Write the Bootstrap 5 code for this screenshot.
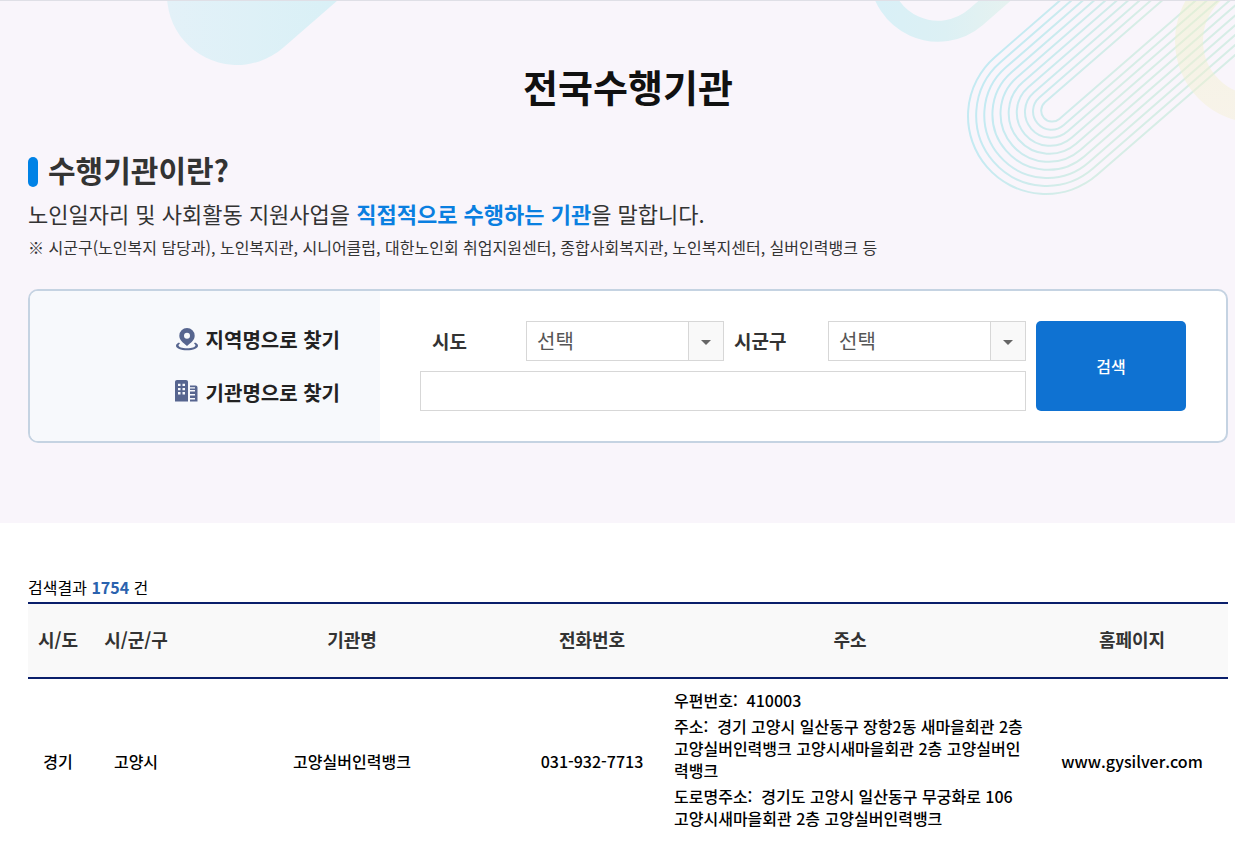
<!DOCTYPE html>
<html lang="ko">
<head>
<meta charset="utf-8">
<meta name="viewport" content="width=device-width, initial-scale=1">
<title>전국수행기관</title>
<link href="https://cdn.jsdelivr.net/npm/bootstrap@5.3.0/dist/css/bootstrap.min.css" rel="stylesheet">
<style>
  body { font-family: "Noto Sans CJK KR", "Noto Sans", sans-serif; color: #000; font-size: 16px; }
  .page-wrap { padding-left: 28px; padding-right: 7px; }
  .hero { background: #f9f5fb; border-top: 1px solid #dfdfe6; padding-bottom: 80px; }
  .hero-art { top: 0; height: 200px; pointer-events: none; }
  .page-title { font-size: 38px; line-height: 56px; color: #111; padding-top: 57px; margin-bottom: 34px; }
  .section-title { font-size: 30px; line-height: 42px; color: #333; padding-left: 20px; margin-bottom: 3px; }
  .section-title::before { content: ""; position: absolute; left: 0; top: 9px; width: 10px; height: 30px; border-radius: 5px; background: #0082e6; }
  .intro { font-size: 22px; line-height: 40px; color: #333; }
  .intro strong { color: #0a7fe0; }
  .note { line-height: 28px; color: #333; margin-bottom: 28px; }
  .search-box { border: 2px solid #c5d3e2; border-radius: 10px; }
  .search-side { width: 350px; background: #f7f9fc; padding: 22px 40px; }
  .search-side a { font-size: 20px; line-height: 53px; color: #222; gap: 8px; }
  .search-form { padding: 30px 40px; gap: 10px; }
  .search-fields { gap: 10px; }
  .region-row { display: grid; grid-template-columns: 94px 1fr 104px 1fr; padding-left: 12px; }
  .region-row label { font-size: 19px; color: #333; }
  .region-row select + label { padding-left: 10px; }
  .field { height: 40px; border: 1px solid #d7d7d7; border-radius: 0; }
  .field-select { -webkit-appearance: none; appearance: none; font-size: 20px; line-height: 38px; color: #555; padding: 0 40px 0 10px; min-width: 0;
    background: url("data:image/svg+xml,%3Csvg xmlns='http://www.w3.org/2000/svg' width='35' height='38'%3E%3Cpath fill='%23f9f9f9' d='M0 0h35v38H0z'/%3E%3Cpath fill='%23d7d7d7' d='M0 0h1v38H0z'/%3E%3Cpath fill='%23666' d='M13 18h10l-5 5z'/%3E%3C/svg%3E") right center no-repeat #fff; }
  .btn-search { width: 150px; background: #0f72d2; color: #fff; border-radius: 5px; font-weight: 500; }
  .btn-search:hover { background: #0b62b8; color: #fff; }
  .results { padding-top: 50px; }
  .result-count { line-height: 29px; }
  .result-count strong { color: #2a62ae; }
  .org-table { table-layout: fixed; font-weight: 500; line-height: 22px; }
  .org-table thead { border-top: 2px solid #0a1f6b; border-bottom: 2px solid #0a1f6b; }
  .org-table th { background: #f9f9f9; color: #333; font-size: 18px; font-weight: 700; padding: 24px 0 27px; }
  .org-table td { padding: 10px 10px 12px; }
  .org-table p { margin-bottom: 4px; word-break: break-all; }
</style>
</head>
<body>
<header class="hero position-relative overflow-hidden">
  <svg class="hero-art position-absolute start-0" width="350" viewBox="0 0 350 200" aria-hidden="true">
    <defs>
      <linearGradient id="blob" gradientUnits="userSpaceOnUse" x1="167" y1="0" x2="335" y2="0">
        <stop offset="0" stop-color="#e3f1f8"/><stop offset="1" stop-color="#d9f0f6"/>
      </linearGradient>
    </defs>
    <path d="M237 -6L388 -137" stroke="url(#blob)" stroke-width="140" stroke-linecap="round"/>
  </svg>
  <svg class="hero-art position-absolute end-0" width="375" viewBox="860 0 375 200" fill="none" aria-hidden="true">
    <defs>
      <linearGradient id="hook" gradientUnits="userSpaceOnUse" x1="880" y1="0" x2="1010" y2="0">
        <stop offset="0" stop-color="#d9f0f7"/><stop offset=".5" stop-color="#dcf0f4"/><stop offset="1" stop-color="#e6f2f0"/>
      </linearGradient>
      <linearGradient id="track" gradientUnits="userSpaceOnUse" x1="-30" y1="-50" x2="30" y2="50">
        <stop offset="0" stop-color="#c4eaf2"/><stop offset=".5" stop-color="#cdebed"/><stop offset="1" stop-color="#d7ede6"/>
      </linearGradient>
      <linearGradient id="ring" gradientUnits="userSpaceOnUse" x1="1200" y1="0" x2="1220" y2="110">
        <stop offset="0" stop-color="#eef1c8" stop-opacity=".45"/><stop offset="1" stop-color="#f5f0d2" stop-opacity=".45"/>
      </linearGradient>
    </defs>
    <path d="M880 -27A58 58 0 0 0 976 16L1030 -31" stroke="url(#hook)" stroke-width="21"/>
    <g transform="translate(1046 115) rotate(-41)" stroke="url(#track)" stroke-width="2">
      <rect x="-78" y="-78" width="600" height="156" rx="78"/>
      <rect x="-69.6" y="-70.5" width="600" height="141" rx="70.5"/>
      <rect x="-61.3" y="-63" width="600" height="126" rx="63"/>
      <rect x="-52.9" y="-55.6" width="600" height="111.2" rx="55.6"/>
      <rect x="-44.6" y="-48.2" width="600" height="96.4" rx="48.2"/>
      <rect x="-36.2" y="-40.7" width="600" height="81.4" rx="40.7"/>
      <rect x="-27.9" y="-33.3" width="600" height="66.6" rx="33.3"/>
      <rect x="-19.5" y="-25.8" width="600" height="51.6" rx="25.8"/>
      <rect x="-11.2" y="-18.4" width="600" height="36.8" rx="18.4"/>
      <rect x="-2.8" y="-11" width="600" height="22" rx="11"/>
    </g>
    <circle cx="1257" cy="40" r="68" stroke="url(#ring)" stroke-width="28"/>
  </svg>

  <div class="page-wrap position-relative">
    <h1 class="page-title text-center fw-bold">전국수행기관</h1>
    <h2 class="section-title position-relative fw-bold">수행기관이란?</h2>
    <p class="intro mb-0">노인일자리 및 사회활동 지원사업을 <strong>직접적으로 수행하는 기관</strong>을 말합니다.</p>
    <p class="note">※ 시군구(노인복지 담당과), 노인복지관, 시니어클럽, 대한노인회 취업지원센터, 종합사회복지관, 노인복지센터, 실버인력뱅크 등</p>

    <div class="search-box d-flex bg-white overflow-hidden">
      <nav class="search-side d-flex flex-column align-items-end flex-shrink-0" aria-label="찾기 방법">
        <a href="#sido" class="d-flex align-items-center fw-bold text-decoration-none">
          <svg width="22" height="24" viewBox="0 0 22 24" fill="#56658f" aria-hidden="true">
            <path fill-rule="evenodd" d="M11 0a7.700 7.700 0 0 0-7.700 7.700C3.300 12 7 14.500 11 18c4-3.500 7.700-6 7.700-10.300A7.700 7.700 0 0 0 11 0zm0 4.700a3 3 0 1 1 0 6 3 3 0 0 1 0-6z"/>
            <path d="M3 14.500C1 15.400 0 16.500 0 17.700 0 20.300 4.700 22.300 11 22.300s11-2 11-4.600c0-1.200-1-2.300-3-3.200l-1 .900c1 .600 1.500 1.200 1.500 1.800 0 1.700-3.500 3-8.500 3s-8.500-1.300-8.500-3c0-.600.500-1.200 1.500-1.800z"/>
          </svg>지역명으로 찾기</a>
        <a href="#orgName" class="d-flex align-items-center fw-bold text-decoration-none">
          <svg width="23" height="26" viewBox="0 0 23 26" aria-hidden="true">
            <path fill="#56658f" fill-rule="evenodd" d="M2 0h9a2 2 0 0 1 2 2v21H0V2a2 2 0 0 1 2-2zM3 4v2.500h2.500V4zm4.500 0v2.500H10V4zM3 8.500V11h2.500V8.500zm4.500 0V11H10V8.500zM3 13v2.500h2.500V13zm4.500 0v2.500H10V13z" transform="scale(1 .93)"/>
            <path fill="#56658f" d="M15 5.500h5.500a2 2 0 0 1 2 2v13.900H15v-2h5V18h-5v-2.500h5V14h-5v-2.500h5V10h-5V8.500h5V7.200h-5z"/>
          </svg>기관명으로 찾기</a>
      </nav>
      <form class="search-form d-flex flex-grow-1" onsubmit="return false">
        <div class="search-fields d-flex flex-column flex-grow-1">
          <div class="region-row align-items-center">
            <label for="sido" class="fw-bold">시도</label>
            <select id="sido" class="field field-select"><option>선택</option></select>
            <label for="sigungu" class="fw-bold">시군구</label>
            <select id="sigungu" class="field field-select"><option>선택</option></select>
          </div>
          <input id="orgName" type="text" class="field w-100 px-2" aria-label="기관명">
        </div>
        <button type="submit" class="btn btn-search border-0 flex-shrink-0">검색</button>
      </form>
    </div>
  </div>
</header>

<main class="page-wrap results">
  <p class="result-count mb-0">검색결과 <strong>1754</strong> 건</p>
  <table class="org-table w-100 text-center align-middle">
    <colgroup>
      <col style="width:5%"><col style="width:8%"><col style="width:28%"><col style="width:12%"><col style="width:31%"><col style="width:16%">
    </colgroup>
    <thead>
      <tr><th scope="col">시/도</th><th scope="col">시/군/구</th><th scope="col">기관명</th><th scope="col">전화번호</th><th scope="col">주소</th><th scope="col">홈페이지</th></tr>
    </thead>
    <tbody>
      <tr>
        <td>경기</td>
        <td>고양시</td>
        <td>고양실버인력뱅크</td>
        <td>031-932-7713</td>
        <td class="text-start">
          <p>우편번호:&nbsp; 410003</p>
          <p>주소:&nbsp; 경기 고양시 일산동구 장항2동 새마을회관 2층 고양실버인력뱅크 고양시새마을회관 2층 고양실버인력뱅크</p>
          <p>도로명주소:&nbsp; 경기도 고양시 일산동구 무궁화로 106 고양시새마을회관 2층 고양실버인력뱅크</p>
        </td>
        <td><a href="#" class="text-reset text-decoration-none">www.gysilver.com</a></td>
      </tr>
    </tbody>
  </table>
</main>
<script src="https://cdn.jsdelivr.net/npm/bootstrap@5.3.0/dist/js/bootstrap.bundle.min.js"></script>
</body>
</html>
